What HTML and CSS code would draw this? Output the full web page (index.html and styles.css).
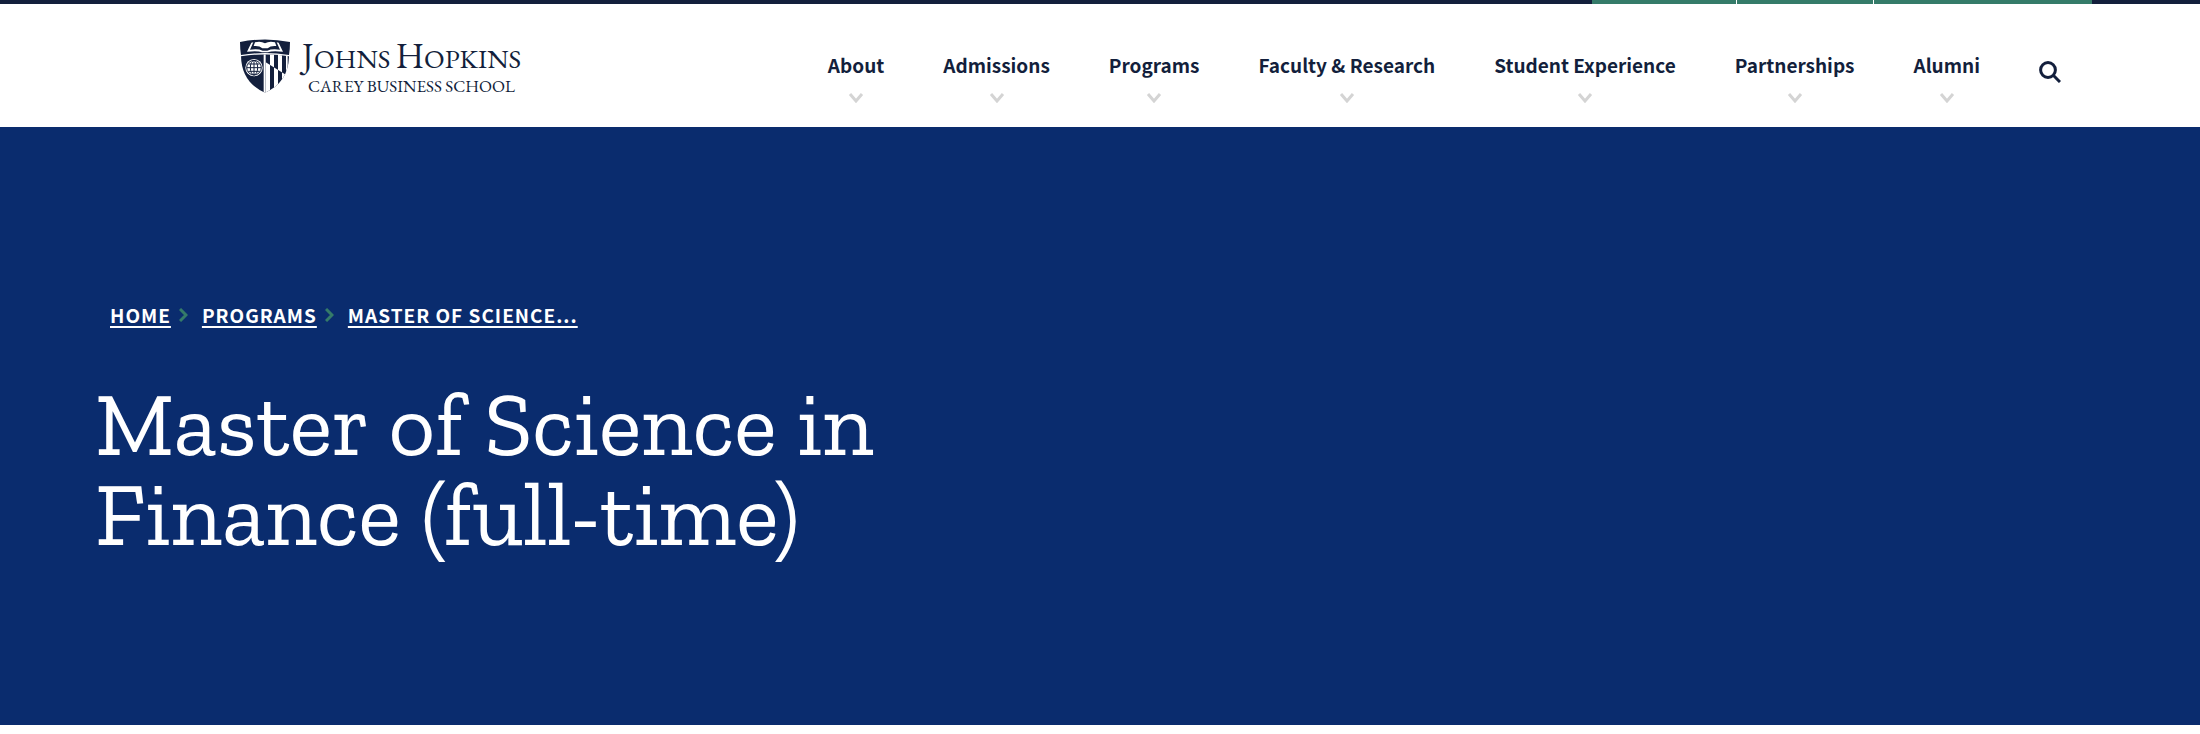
FILE: index.html
```
<!DOCTYPE html>
<html lang="en">
  <head>
    <meta charset="UTF-8" />
    <meta name="viewport" content="width=device-width, initial-scale=1.0" />
    <title>Master of Science in Finance (full-time)</title>
    <link rel="stylesheet" href="styles.css">
  </head>
  <body>
    <header>
      <div class="top-bar">
        <span class="top-tab tab-small"></span>
        <span class="top-tab tab-smaller"></span>
        <span class="top-tab tab-large"></span>
      </div>
      <div class="header-main">
        <a class="logo" href="#">
          <svg class="shield" viewBox="0 0 150 160" aria-hidden="true">
            <defs>
              <clipPath id="body-clip">
                <path d="M3 51Q75 39 147 51Q145 130 75 160Q5 130 3 51Z" />
              </clipPath>
              <clipPath id="above-bend">
                <path d="M76 40H150V114L76 68Z" />
              </clipPath>
              <clipPath id="below-bend">
                <path d="M76 68L150 114V160H76Z" />
              </clipPath>
            </defs>
            <path fill="#131f3c" d="M0 8Q75 -7 150 8Q150 28 147 47Q75 35 3 47Q0 28 0 8Z" />
            <!-- open book -->
            <path fill="#fff" d="M34 10L40 9L30 31Q54 27 68 34H82Q96 27 120 31L110 9L116 10L129 37Q96 33 84 39H66Q54 33 21 37Z" />
            <path fill="#fff" d="M45 9Q62 4 75 12Q88 4 105 9L109 20Q92 18 83 27H67Q58 18 41 20Z" />
            <g clip-path="url(#body-clip)">
              <path fill="#131f3c" d="M0 38H150V160H0Z" />
              <path fill="#fff" d="M71 38H77V160H71Z" />
              <g fill="#fff" clip-path="url(#above-bend)">
                <path d="M90 38h12v122h-12zM114 38h12v122h-12zM138 38h5v122h-5z" />
              </g>
              <g fill="#fff" clip-path="url(#below-bend)">
                <path d="M77 38h13v122h-13zM102 38h12v122h-12zM126 38h12v122h-12z" />
              </g>
            </g>
            <!-- globe -->
            <circle cx="42" cy="85" r="26" fill="#fff" />
            <g fill="none" stroke="#131f3c" stroke-width="3">
              <circle cx="42" cy="85" r="22" />
              <ellipse cx="42" cy="85" rx="11" ry="22" />
              <path d="M42 63V107M20 85H64M25 74H59M25 96H59" />
            </g>
          </svg>
          <span class="logo-text">
            <span class="logo-name"><b>J</b>OHNS <b>H</b>OPKINS</span>
            <span class="logo-school">CAREY BUSINESS SCHOOL</span>
          </span>
        </a>
        <nav class="main-nav">
          <a href="#">About<svg viewBox="0 0 16 10"><path d="M2 1L8 8L14 1" /></svg></a>
          <a href="#">Admissions<svg viewBox="0 0 16 10"><path d="M2 1L8 8L14 1" /></svg></a>
          <a href="#">Programs<svg viewBox="0 0 16 10"><path d="M2 1L8 8L14 1" /></svg></a>
          <a href="#">Faculty &amp; Research<svg viewBox="0 0 16 10"><path d="M2 1L8 8L14 1" /></svg></a>
          <a href="#">Student Experience<svg viewBox="0 0 16 10"><path d="M2 1L8 8L14 1" /></svg></a>
          <a href="#">Partnerships<svg viewBox="0 0 16 10"><path d="M2 1L8 8L14 1" /></svg></a>
          <a href="#">Alumni<svg viewBox="0 0 16 10"><path d="M2 1L8 8L14 1" /></svg></a>
          <button class="search-button" type="button" aria-label="Search">
            <svg viewBox="0 0 22 22"><circle cx="9" cy="9" r="7.4" /><path d="M14 14L21 21" /></svg>
          </button>
        </nav>
      </div>
    </header>
    <main class="hero">
      <nav class="breadcrumb" aria-label="Breadcrumb">
        <a href="#">HOME</a>
        <svg viewBox="0 0 9 14"><path d="M1 1L7 7L1 13" /></svg>
        <a href="#">PROGRAMS</a>
        <svg viewBox="0 0 9 14"><path d="M1 1L7 7L1 13" /></svg>
        <a href="#">MASTER OF SCIENCE...</a>
      </nav>
      <h1>Master of Science in Finance (full-time)</h1>
    </main>
  </body>
</html>
```

FILE: styles.css
```
* {
  box-sizing: border-box;
}
body {
  margin: 0;
  background: white;
  color: #131f3c;
  font-family: "Noto Sans CJK SC", sans-serif;
}
.top-bar {
  display: flex;
  justify-content: flex-end;
  gap: 1px;
  height: 4px;
  padding-right: 108px;
  background: #131f3c;
}
.top-tab {
  background: #357b69;
}
.top-tab + .top-tab {
  box-shadow: -1px 0 white;
}
.tab-small {
  width: 144px;
}
.tab-smaller {
  width: 136px;
}
.tab-large {
  width: 218px;
}
.header-main {
  display: flex;
  justify-content: space-between;
  align-items: flex-start;
  padding: 35px 139px 0 240px;
  height: 123px;
}
.logo {
  display: flex;
  gap: 12px;
  color: #131f3c;
  text-decoration: none;
  font-family: "EB Garamond", "Liberation Serif", serif;
}
.shield {
  width: 50px;
  height: 54px;
}
.logo-text {
  display: flex;
  flex-direction: column;
  white-space: nowrap;
}
.logo-name {
  font-size: 27px;
  line-height: 34px;
}
.logo-name b {
  font-size: 35px;
  font-weight: 400;
}
.logo-school {
  padding-left: 6px;
  font-size: 17px;
  line-height: 20px;
}
.main-nav {
  display: flex;
  gap: 59px;
  padding-top: 11px;
}
.main-nav a {
  display: flex;
  flex-direction: column;
  align-items: center;
  gap: 13px;
  color: #131f3c;
  font-size: 19px;
  font-weight: 700;
  line-height: 30px;
  text-decoration: none;
  white-space: nowrap;
}
.main-nav a svg {
  width: 16px;
  height: 10px;
  fill: none;
  stroke: #d4d4d4;
  stroke-width: 3;
}
.search-button {
  align-self: flex-start;
  margin-top: 11px;
  padding: 0;
  border: 0;
  background: none;
}
.search-button svg {
  display: block;
  width: 22px;
  height: 22px;
  fill: none;
  stroke: #131f3c;
  stroke-width: 3;
}
.hero {
  padding: 173px 95px 166px;
  background: #0a2c6e;
  color: white;
}
.breadcrumb {
  display: flex;
  align-items: center;
  padding-left: 15px;
}
.breadcrumb a {
  color: white;
  font-size: 19px;
  font-weight: 700;
  line-height: 30px;
  letter-spacing: 1px;
  text-decoration: underline;
  text-decoration-thickness: 2px;
  text-underline-offset: 3px;
}
.breadcrumb svg {
  width: 9px;
  height: 14px;
  margin: 0 14px 0 8px;
  fill: none;
  stroke: #357b69;
  stroke-width: 3;
}
h1 {
  max-width: 900px;
  margin: 49px 0 0;
  font-family: "Zilla Slab", "DejaVu Serif Condensed", "DejaVu Serif", serif;
  font-size: 90px;
  font-weight: 400;
  line-height: 90px;
}
```
